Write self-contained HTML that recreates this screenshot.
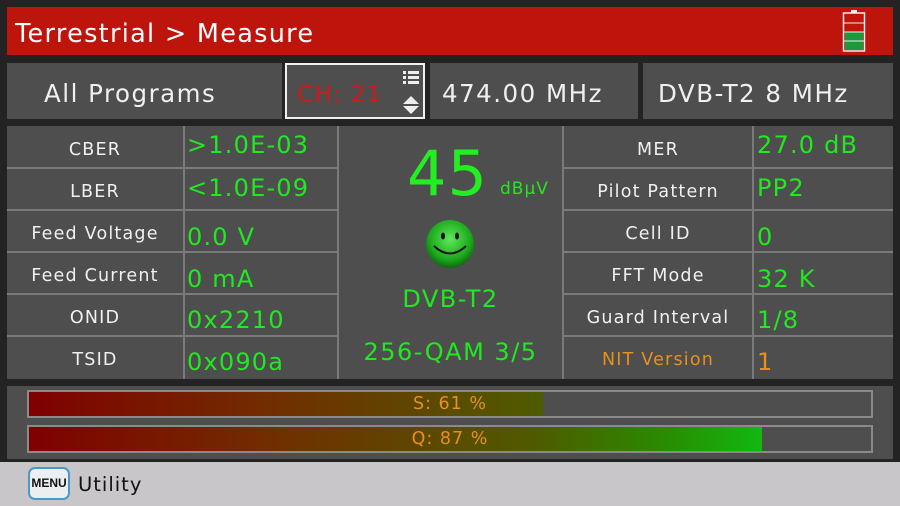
<!DOCTYPE html>
<html><head><meta charset="utf-8"><style>
*{margin:0;padding:0;box-sizing:border-box}
body{width:900px;height:506px;background:#232323;position:relative;overflow:hidden;font-family:"DejaVu Sans","Liberation Sans",sans-serif}
.a{position:absolute}
.p{position:absolute;background:#4d4e4d}
.lb{position:absolute;color:#f0f0f0;font-size:17.5px;line-height:20px;letter-spacing:1.2px;text-align:center}
.v{position:absolute;color:#22e822;font-size:24px;line-height:27px;letter-spacing:1.2px}
.hl{position:absolute;height:2px;background:#7a7a7a}
.vl{position:absolute;width:2px;background:#7a7a7a}
.bar{position:absolute;left:27px;width:846px;height:28px;border:2px solid #8a8a8a;background:#4d4e4d}
.fill{position:absolute;left:0;top:0;bottom:0;background:linear-gradient(to right,#800000 0%,#703000 30%,#4f5a00 60%,#2a8a00 75%,#12b810 87%,#10c010 100%);background-size:842px 100%}
.bt{position:absolute;left:0;right:0;top:0;line-height:24px;text-align:center;color:#e8901c;font-size:17.5px;letter-spacing:1px}
</style></head><body>
<div class="a" style="left:7px;top:7px;width:886px;height:48px;background:#bd140c"></div>
<div class="a" style="left:15px;top:17px;color:#fff;font-size:25.5px;letter-spacing:1.3px;line-height:34px">Terrestrial &gt; Measure</div>
<svg class="a" style="left:841px;top:9px" width="26" height="44" viewBox="0 0 26 44">
<rect x="10" y="1" width="6" height="3" fill="#eee"/>
<rect x="2.5" y="4" width="21" height="38" fill="none" stroke="#eee" stroke-width="1.5"/>
<rect x="4" y="5.5" width="18" height="8" fill="#c0140c"/>
<rect x="4" y="14.5" width="18" height="8" fill="#c0140c"/>
<rect x="4" y="23.5" width="18" height="8" fill="#1a9a3a"/>
<rect x="4" y="32.5" width="18" height="8.5" fill="#1a9a3a"/>
<rect x="3" y="13.5" width="20" height="1" fill="#eee"/><rect x="3" y="22.5" width="20" height="1" fill="#eee"/><rect x="3" y="31.5" width="20" height="1" fill="#eee"/>
</svg>

<div class="p" style="left:7px;top:63px;width:275px;height:56px"></div>
<div class="a" style="left:44px;top:78px;color:#f0f0f0;font-size:24.5px;letter-spacing:1.5px;line-height:32px">All Programs</div>
<div class="p" style="left:285px;top:63px;width:140px;height:56px;border:2px solid #f0f0f0"></div>
<div class="a" style="left:297px;top:79px;color:#d01a1a;font-size:23.5px;letter-spacing:1px;line-height:30px">CH: 21</div>
<svg class="a" style="left:402px;top:69px" width="18" height="48" viewBox="0 0 18 48">
<g fill="#eee"><rect x="1" y="2" width="3" height="3"/><rect x="6" y="2" width="11" height="3"/><rect x="1" y="7" width="3" height="3"/><rect x="6" y="7" width="11" height="3"/><rect x="1" y="12" width="3" height="3"/><rect x="6" y="12" width="11" height="3"/>
<polygon points="9,27 17,35 1,35"/><polygon points="1,37 17,37 9,45"/></g></svg>
<div class="p" style="left:430px;top:63px;width:208px;height:56px"></div>
<div class="a" style="left:442px;top:78px;color:#f0f0f0;font-size:24.5px;letter-spacing:1.5px;line-height:32px">474.00 MHz</div>
<div class="p" style="left:643px;top:63px;width:250px;height:56px"></div>
<div class="a" style="left:658px;top:78px;color:#f0f0f0;font-size:24.5px;letter-spacing:1.5px;line-height:32px">DVB-T2 8 MHz</div>

<div class="p" style="left:7px;top:126px;width:886px;height:253px"></div>
<div class="vl" style="left:183px;top:126px;height:253px"></div>
<div class="vl" style="left:337px;top:126px;height:253px"></div>
<div class="vl" style="left:562px;top:126px;height:253px"></div>
<div class="vl" style="left:752px;top:126px;height:253px"></div>
<div class="hl" style="left:7px;width:331px;top:167px"></div><div class="hl" style="left:562px;width:331px;top:167px"></div>
<div class="hl" style="left:7px;width:331px;top:209px"></div><div class="hl" style="left:562px;width:331px;top:209px"></div>
<div class="hl" style="left:7px;width:331px;top:251px"></div><div class="hl" style="left:562px;width:331px;top:251px"></div>
<div class="hl" style="left:7px;width:331px;top:293px"></div><div class="hl" style="left:562px;width:331px;top:293px"></div>
<div class="hl" style="left:7px;width:331px;top:335px"></div><div class="hl" style="left:562px;width:331px;top:335px"></div>

<div class="lb" style="left:7px;width:176px;top:140px">CBER</div>
<div class="lb" style="left:7px;width:176px;top:182px">LBER</div>
<div class="lb" style="left:7px;width:176px;top:224px">Feed Voltage</div>
<div class="lb" style="left:7px;width:176px;top:266px">Feed Current</div>
<div class="lb" style="left:7px;width:176px;top:308px">ONID</div>
<div class="lb" style="left:7px;width:176px;top:350px">TSID</div>
<div class="v" style="left:187px;top:132px">&gt;1.0E-03</div>
<div class="v" style="left:187px;top:175px">&lt;1.0E-09</div>
<div class="v" style="left:187px;top:224px">0.0 V</div>
<div class="v" style="left:187px;top:266px">0 mA</div>
<div class="v" style="left:187px;top:307px">0x2210</div>
<div class="v" style="left:187px;top:349px">0x090a</div>

<div class="lb" style="left:564px;width:188px;top:140px">MER</div>
<div class="lb" style="left:564px;width:188px;top:182px">Pilot Pattern</div>
<div class="lb" style="left:564px;width:188px;top:224px">Cell ID</div>
<div class="lb" style="left:564px;width:188px;top:266px">FFT Mode</div>
<div class="lb" style="left:564px;width:188px;top:308px">Guard Interval</div>
<div class="lb" style="left:564px;width:188px;top:350px;color:#e8901c">NIT Version</div>
<div class="v" style="left:757px;top:132px">27.0 dB</div>
<div class="v" style="left:757px;top:175px">PP2</div>
<div class="v" style="left:757px;top:224px">0</div>
<div class="v" style="left:757px;top:266px">32 K</div>
<div class="v" style="left:757px;top:307px">1/8</div>
<div class="v" style="left:757px;top:349px;color:#e8901c">1</div>

<div class="a" style="left:407px;top:138px;color:#22ee22;font-size:62px;line-height:72px;letter-spacing:1px">45</div>
<div class="a" style="left:500px;top:178px;color:#22e822;font-size:17px;line-height:22px;letter-spacing:1px">dBµV</div>
<svg class="a" style="left:425px;top:219px" width="50" height="50" viewBox="0 0 50 50">
<defs><radialGradient id="g" cx="0.5" cy="0.4" r="0.6"><stop offset="0" stop-color="#5ee85a"/><stop offset="0.7" stop-color="#1eaa1e"/><stop offset="1" stop-color="#0d6a10"/></radialGradient></defs>
<circle cx="25" cy="25" r="24" fill="url(#g)"/>
<ellipse cx="18" cy="17" rx="2" ry="3.5" fill="#111"/><ellipse cx="32" cy="17" rx="2" ry="3.5" fill="#111"/>
<path d="M9 27 Q25 42 41 27" fill="none" stroke="#111" stroke-width="2"/></svg>
<div class="a" style="left:339px;width:223px;top:285px;text-align:center;color:#22e822;font-size:24px;line-height:28px;letter-spacing:1.5px">DVB-T2</div>
<div class="a" style="left:339px;width:223px;top:338px;text-align:center;color:#22e822;font-size:24px;line-height:28px;letter-spacing:1.5px">256-QAM 3/5</div>

<div class="p" style="left:7px;top:386px;width:886px;height:73px"></div>
<div class="bar" style="top:390px"><div class="fill" style="width:514px"></div><div class="bt">S: 61 %</div></div>
<div class="bar" style="top:425px"><div class="fill" style="width:733px"></div><div class="bt">Q: 87 %</div></div>

<div class="a" style="left:0;top:462px;width:900px;height:44px;background:#c8c6c8"></div>
<div class="a" style="left:28px;top:467px;width:42px;height:33px;background:#eceff2;border:2px solid #4a9ac8;border-radius:7px;font-size:12px;font-weight:bold;line-height:29px;text-align:center;color:#111;font-family:'Liberation Sans',sans-serif">MENU</div>
<div class="a" style="left:78px;top:473px;color:#111;font-size:19.5px;line-height:24px;letter-spacing:1px">Utility</div>
</body></html>
